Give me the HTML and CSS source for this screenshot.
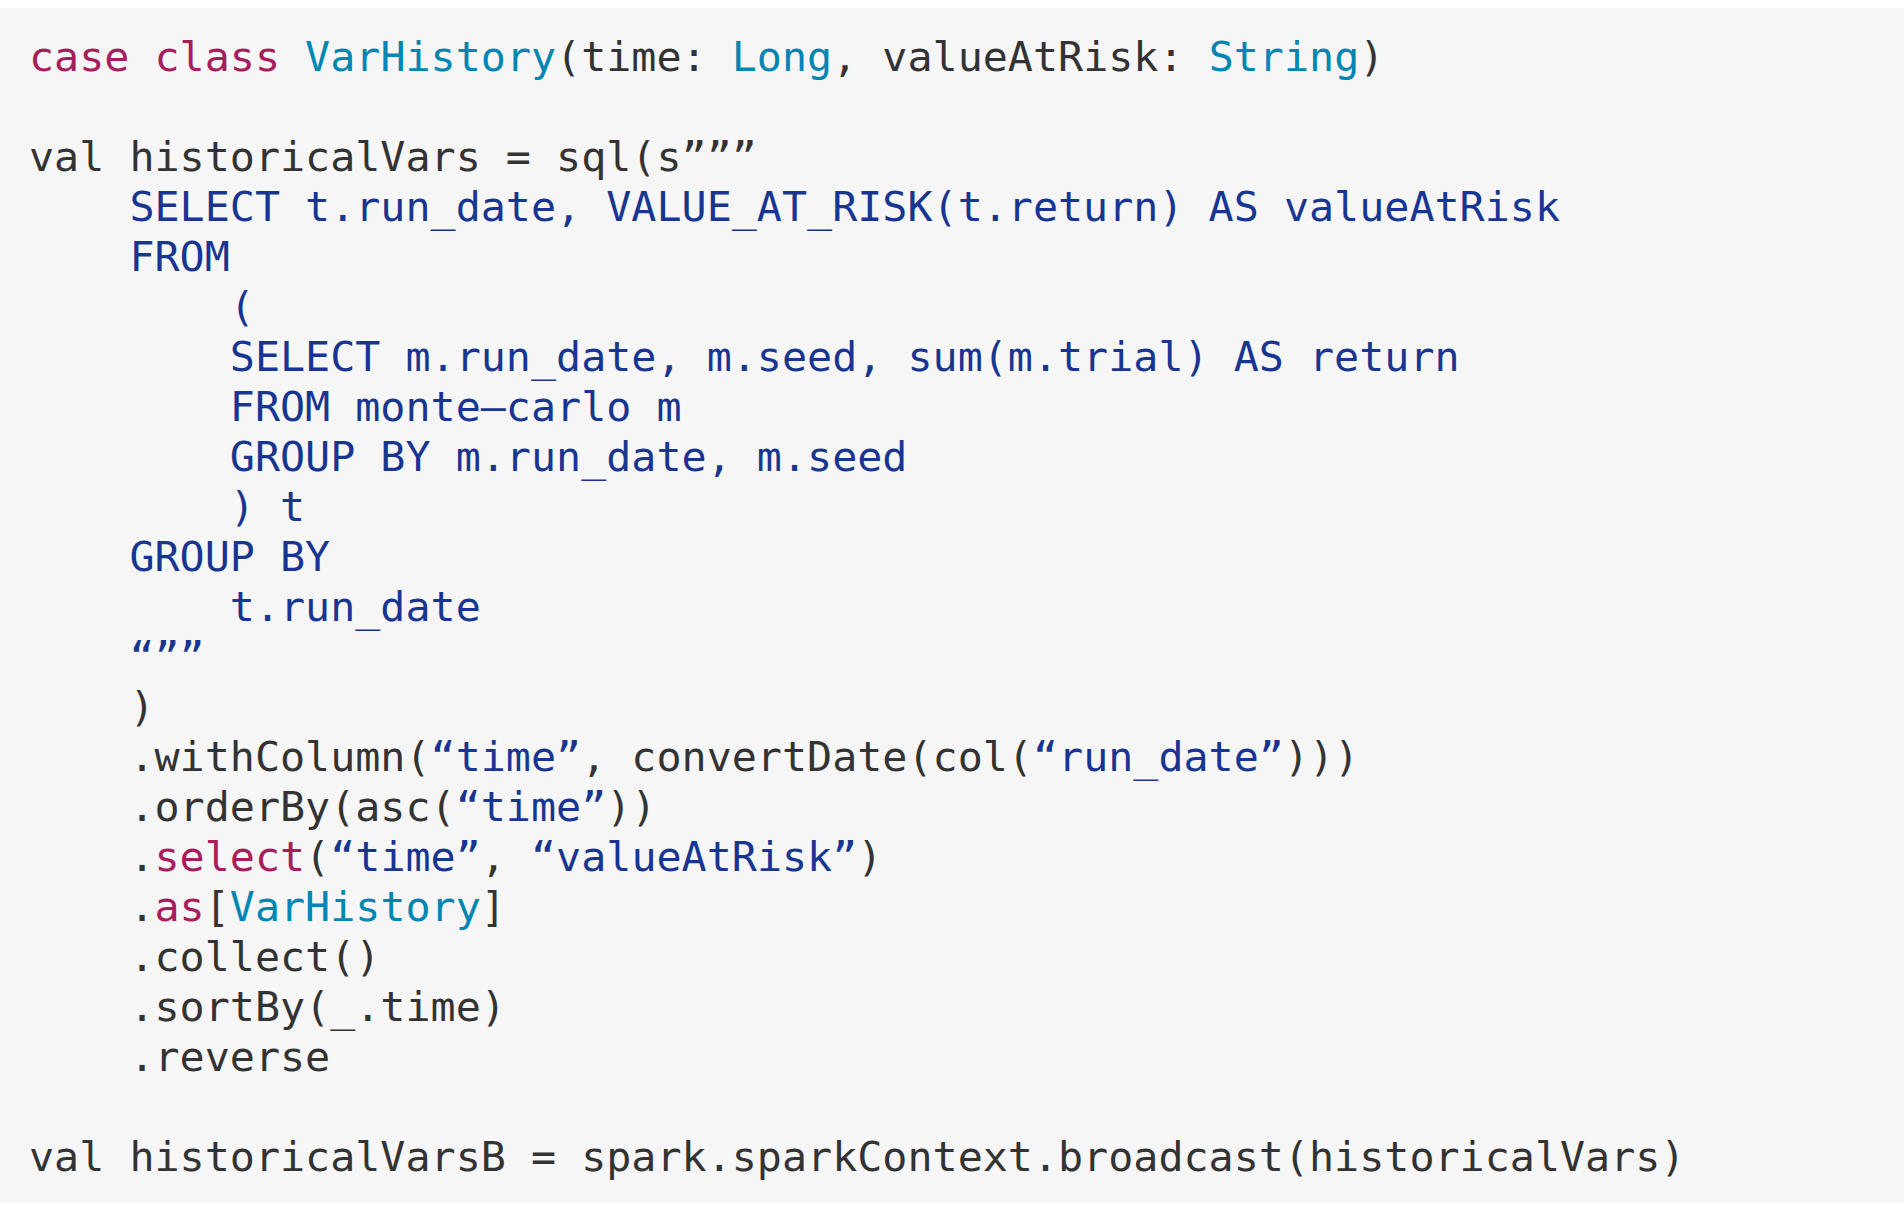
FILE: index.html
```html
<!DOCTYPE html>
<html>
<head>
<meta charset="utf-8">
<link rel="stylesheet" href="styles.css">
</head>
<body>
<pre class="code"><span class="kw">case class</span> <span class="ty">VarHistory</span>(time: <span class="ty">Long</span>, valueAtRisk: <span class="ty">String</span>)

val historicalVars = sql(s”””
<span class="str">    SELECT t.run_date, VALUE_AT_RISK(t.return) AS valueAtRisk
    FROM
        (
        SELECT m.run_date, m.seed, sum(m.trial) AS return
        FROM monte–carlo m
        GROUP BY m.run_date, m.seed
        ) t
    GROUP BY
        t.run_date
    “””</span>
    )
    .withColumn(<span class="str">“time”</span>, convertDate(col(<span class="str">“run_date”</span>)))
    .orderBy(asc(<span class="str">“time”</span>))
    .<span class="kw">select</span>(<span class="str">“time”</span>, <span class="str">“valueAtRisk”</span>)
    .<span class="kw">as</span>[<span class="ty">VarHistory</span>]
    .collect()
    .sortBy(_.time)
    .reverse

val historicalVarsB = spark.sparkContext.broadcast(historicalVars)</pre>
</body>
</html>
```

FILE: styles.css
```css
html, body {
  margin: 0;
  padding: 0;
  background: #ffffff;
}

body {
  padding-top: 8px;
}

.code {
  margin: 0;
  box-sizing: border-box;
  height: 1195px;
  padding: 24px 0 21px 29px;
  background: #f6f6f6;
  color: #333333;
  font-family: "DejaVu Sans Mono", "Liberation Mono", monospace;
  font-size: 41.7px;
  line-height: 50px;
  white-space: pre;
  overflow: hidden;
}

.kw {
  color: #a71d5d;
}

.ty {
  color: #0086b3;
}

.str {
  color: #183691;
}
```
